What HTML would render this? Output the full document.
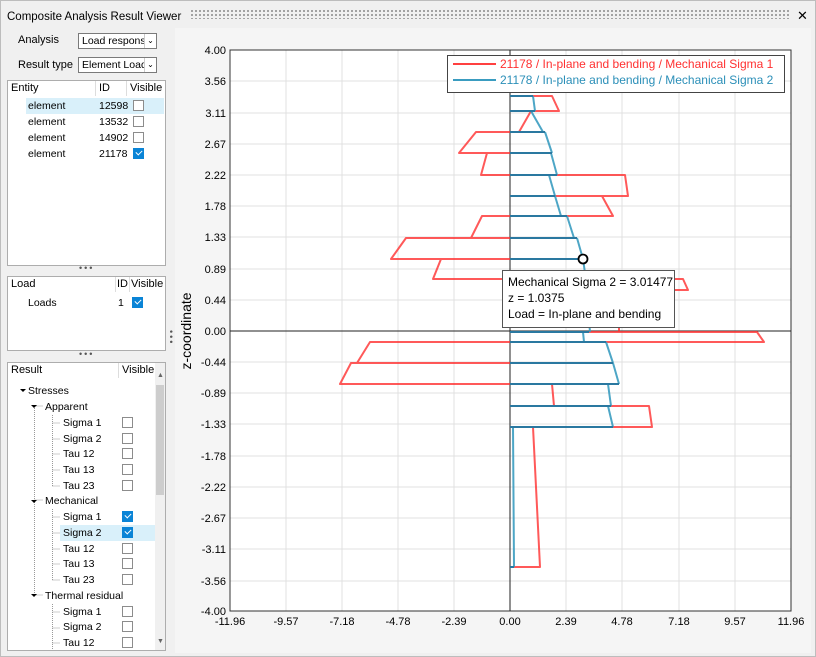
<!DOCTYPE html><html><head><meta charset="utf-8"><style>
*{margin:0;padding:0;box-sizing:border-box}
body{width:816px;height:657px;background:#f0f0f0;font-family:"Liberation Sans",sans-serif;font-size:10.5px;color:#000;position:relative;overflow:hidden}
.a{position:absolute;white-space:nowrap}
.box{position:absolute;background:#fff;border:1px solid #adadad}
.cb{position:absolute;width:11px;height:11px;border:1px solid #8c8c8c;background:#fff}
.cb.on{background:#0a84d6;border-color:#0a84d6}
.cb.on:after{content:"";position:absolute;left:2px;top:1px;width:5px;height:3px;border-left:1.5px solid #fff;border-bottom:1.5px solid #fff;transform:rotate(-45deg)}
.combo{position:absolute;height:16px;border:1px solid #7a7a7a;background:#fff;padding:1px 3px;font-size:10.5px}
.combo i{position:absolute;right:0;top:0;width:12px;height:14px;border-left:1px solid #ccc;font-style:normal;font-size:8px;text-align:center;line-height:14px;background:#fff}
.hdr{position:absolute;border-right:1px solid #ddd;height:15px;top:0;padding-left:3px;line-height:15px;font-size:11px}
.dots{position:absolute;font-size:9px;letter-spacing:2px;color:#555}
</style></head><body>
<div style="position:absolute;left:0;top:0;width:816px;height:657px;border:1px solid #bdbdbd"></div>
<div class="a" style="left:7px;top:11px;font-size:11.5px">Composite Analysis Result Viewer</div>
<div class="a" style="left:190px;top:9px;width:600px;height:10px;background-image:radial-gradient(#888 0.8px,transparent 1px);background-size:4px 4px"></div>
<div class="a" style="left:797px;top:8px;font-size:13px">✕</div>

<div class="a" style="left:18px;top:34px;font-size:11px">Analysis</div>
<div class="combo" style="left:78px;top:33px;width:79px">Load respons<i>⌄</i></div>
<div class="a" style="left:18px;top:59px;font-size:11px">Result type</div>
<div class="combo" style="left:78px;top:57px;width:79px">Element Load<i>⌄</i></div>

<div class="box" style="left:7px;top:80px;width:159px;height:186px">
 <div class="hdr" style="left:0;width:88px">Entity</div><div class="hdr" style="left:88px;width:31px">ID</div><div class="hdr" style="left:119px;width:38px;border:none">Visible</div>
 <div class="a" style="left:18px;top:17px;width:138px;height:16px;background:#d9f0fa"></div>
 <div class="a" style="left:20px;top:19px">element</div><div class="a" style="left:91px;top:19px">12598</div><div class="cb" style="left:125px;top:19px"></div>
 <div class="a" style="left:20px;top:35px">element</div><div class="a" style="left:91px;top:35px">13532</div><div class="cb" style="left:125px;top:35px"></div>
 <div class="a" style="left:20px;top:51px">element</div><div class="a" style="left:91px;top:51px">14902</div><div class="cb" style="left:125px;top:51px"></div>
 <div class="a" style="left:20px;top:67px">element</div><div class="a" style="left:91px;top:67px">21178</div><div class="cb on" style="left:125px;top:67px"></div>
</div>
<div class="dots" style="left:79px;top:263px">•••</div>
<div class="box" style="left:7px;top:276px;width:159px;height:75px">
 <div class="hdr" style="left:0;width:108px">Load</div><div class="hdr" style="left:108px;width:14px;padding-left:1px">ID</div><div class="hdr" style="left:122px;width:36px;border:none;padding-left:1px">Visible</div>
 <div class="a" style="left:20px;top:20px">Loads</div><div class="a" style="left:110px;top:20px">1</div><div class="cb on" style="left:124px;top:20px"></div>
</div>
<div class="dots" style="left:79px;top:349px">•••</div>
<div class="dots" style="left:166px;top:330px;writing-mode:vertical-lr">•••</div>
<div class="box" style="left:7px;top:362px;width:159px;height:289px">
 <div class="hdr" style="left:0;width:111px">Result</div><div class="hdr" style="left:111px;width:36px;border:none">Visible</div>
 <div class="a" style="left:147px;top:0;width:10px;height:287px;background:#f0f0f0"></div>
 <div class="a" style="left:148px;top:22px;width:8px;height:110px;background:#cdcdcd"></div>
 <div class="a" style="left:149px;top:9px;font-size:7px;color:#666">▲</div>
 <div class="a" style="left:149px;top:275px;font-size:7px;color:#666">▼</div>
 <svg class="a" style="left:0;top:0" width="147" height="287">
  <g stroke="#999" stroke-dasharray="1 1" fill="none">
   <path d="M26.5 43V232M26.5 43H35M26.5 137H35M26.5 232H35"/>
   <path d="M44.5 52V123M44.5 60H52M44.5 76H52M44.5 91H52M44.5 107H52M44.5 123H52"/>
   <path d="M44.5 146V217M44.5 154H52M44.5 170H52M44.5 186H52M44.5 201H52M44.5 217H52"/>
   <path d="M44.5 241V287M44.5 249H52M44.5 265H52M44.5 280H52"/>
  </g>
  <g fill="#000"><path d="M12 26h6l-3 3z"/><path d="M23 42h6l-3 3z"/><path d="M23 137h6l-3 3z"/><path d="M23 231h6l-3 3z"/></g>
 </svg>
 <div class="a" style="left:52px;top:162px;width:95px;height:16px;background:#d9f0fa"></div>
 <div class="a" style="left:20px;top:22px">Stresses</div>
 <div class="a" style="left:37px;top:38px">Apparent</div>
 <div class="a" style="left:55px;top:54px">Sigma 1</div><div class="cb" style="left:114px;top:54px"></div>
 <div class="a" style="left:55px;top:70px">Sigma 2</div><div class="cb" style="left:114px;top:70px"></div>
 <div class="a" style="left:55px;top:85px">Tau 12</div><div class="cb" style="left:114px;top:85px"></div>
 <div class="a" style="left:55px;top:101px">Tau 13</div><div class="cb" style="left:114px;top:101px"></div>
 <div class="a" style="left:55px;top:117px">Tau 23</div><div class="cb" style="left:114px;top:117px"></div>
 <div class="a" style="left:37px;top:132px">Mechanical</div>
 <div class="a" style="left:55px;top:148px">Sigma 1</div><div class="cb on" style="left:114px;top:148px"></div>
 <div class="a" style="left:55px;top:164px">Sigma 2</div><div class="cb on" style="left:114px;top:164px"></div>
 <div class="a" style="left:55px;top:180px">Tau 12</div><div class="cb" style="left:114px;top:180px"></div>
 <div class="a" style="left:55px;top:195px">Tau 13</div><div class="cb" style="left:114px;top:195px"></div>
 <div class="a" style="left:55px;top:211px">Tau 23</div><div class="cb" style="left:114px;top:211px"></div>
 <div class="a" style="left:37px;top:227px">Thermal residual</div>
 <div class="a" style="left:55px;top:243px">Sigma 1</div><div class="cb" style="left:114px;top:243px"></div>
 <div class="a" style="left:55px;top:258px">Sigma 2</div><div class="cb" style="left:114px;top:258px"></div>
 <div class="a" style="left:55px;top:274px">Tau 12</div><div class="cb" style="left:114px;top:274px"></div>
</div>

<svg class="a" style="left:0;top:0" width="816" height="657" font-family="Liberation Sans" font-size="11">
 <rect x="175" y="28" width="636" height="625" fill="#f5f5f5"/>
 <rect x="230" y="50" width="561" height="561" fill="#fff"/>
 <g stroke="#e0e0e0" stroke-width="1">
  <path d="M286 50V611M342 50V611M398 50V611M454 50V611M566 50V611M622 50V611M679 50V611M735 50V611"/>
  <path d="M230 81H791M230 113H791M230 144H791M230 175H791M230 206H791M230 237H791M230 269H791M230 300H791M230 362H791M230 393H791M230 424H791M230 456H791M230 487H791M230 518H791M230 549H791M230 581H791"/>
 </g>
 <rect x="230" y="50" width="561" height="561" fill="none" stroke="#333"/>
 <path d="M510 50V611M230 331H791" stroke="#222"/>
 <g fill="none" stroke="#ff3030" stroke-opacity="0.8" stroke-width="2" stroke-linejoin="round">
  <path d="M510 96H552L559 111H510M510 111H531L519 132H510M510 132H476L459 153H510M510 153H487L481 175H510M510 175H625L628 196H510M510 196H602L613 216H510M510 216H482L471 238H510M510 238H406L391 259H510M510 259H441L433 279H510M510 279H683L688 290H510M510 321H619L619 332H510M510 332H757L764 342H510M510 342H370L357 363H510M510 363H351L340 384H510M510 384H552L554 406H510M510 406H649L652 427H510M510 427H533L540 567H510"/>
 </g>
 <g fill="none" stroke="#3a9cc0" stroke-opacity="0.9" stroke-width="2" stroke-linejoin="round">
  <path d="M533 96L535 111M531 111L543 132M545 132L552 153M551 153L557 175M549 175L555 196M555 196L561 216M567 216L574 238M577 238L583 259M583 259L586 280M589 321L590 332M583 332L584 342M606 342L613 363M613 363L619 384M608 384L611 406M608 406L613 427M513 427L514 567"/>
 </g>
 <g stroke="#2a78a0" stroke-width="2">
  <path d="M510 96H533M510 111H535M510 132H545M510 153H552M510 175H557M510 196H555M510 216H567M510 238H577M510 259H583M510 280H586M510 332H589M510 342H606M510 363H613M510 384H619M510 406H611M510 427H613M510 567H514"/>
 </g>
 <circle cx="583" cy="259" r="4.5" fill="#fff" stroke="#000" stroke-width="1.8"/>
 <rect x="502.5" y="270.5" width="172" height="57" fill="#fff" stroke="#555"/>
 <text x="508" y="286" font-size="12">Mechanical Sigma 2 = 3.01477</text>
 <text x="508" y="302" font-size="12">z = 1.0375</text>
 <text x="508" y="318" font-size="12">Load = In-plane and bending</text>
 <rect x="447.5" y="55.5" width="337" height="37" fill="#fff" stroke="#444"/>
 <path d="M453 64H496" stroke="#ff4040" stroke-width="2"/><path d="M453 80H496" stroke="#3a9cc0" stroke-width="2"/>
 <text x="500" y="68" fill="#ff3030" font-size="12">21178 / In-plane and bending / Mechanical Sigma 1</text>
 <text x="500" y="84" fill="#2b8fb8" font-size="12">21178 / In-plane and bending / Mechanical Sigma 2</text>
 <g text-anchor="end" font-size="11">
  <text x="226" y="54">4.00</text><text x="226" y="85">3.56</text><text x="226" y="117">3.11</text><text x="226" y="148">2.67</text><text x="226" y="179">2.22</text><text x="226" y="210">1.78</text><text x="226" y="241">1.33</text><text x="226" y="273">0.89</text><text x="226" y="304">0.44</text><text x="226" y="335">0.00</text><text x="226" y="366">-0.44</text><text x="226" y="397">-0.89</text><text x="226" y="428">-1.33</text><text x="226" y="460">-1.78</text><text x="226" y="491">-2.22</text><text x="226" y="522">-2.67</text><text x="226" y="553">-3.11</text><text x="226" y="585">-3.56</text><text x="226" y="615">-4.00</text>
 </g>
 <g text-anchor="middle" font-size="11">
  <text x="230" y="625">-11.96</text><text x="286" y="625">-9.57</text><text x="342" y="625">-7.18</text><text x="398" y="625">-4.78</text><text x="454" y="625">-2.39</text><text x="510" y="625">0.00</text><text x="566" y="625">2.39</text><text x="622" y="625">4.78</text><text x="679" y="625">7.18</text><text x="735" y="625">9.57</text><text x="791" y="625">11.96</text>
 </g>
 <text transform="translate(191 331) rotate(-90)" text-anchor="middle" font-size="14">z-coordinate</text>
</svg>
</body></html>
